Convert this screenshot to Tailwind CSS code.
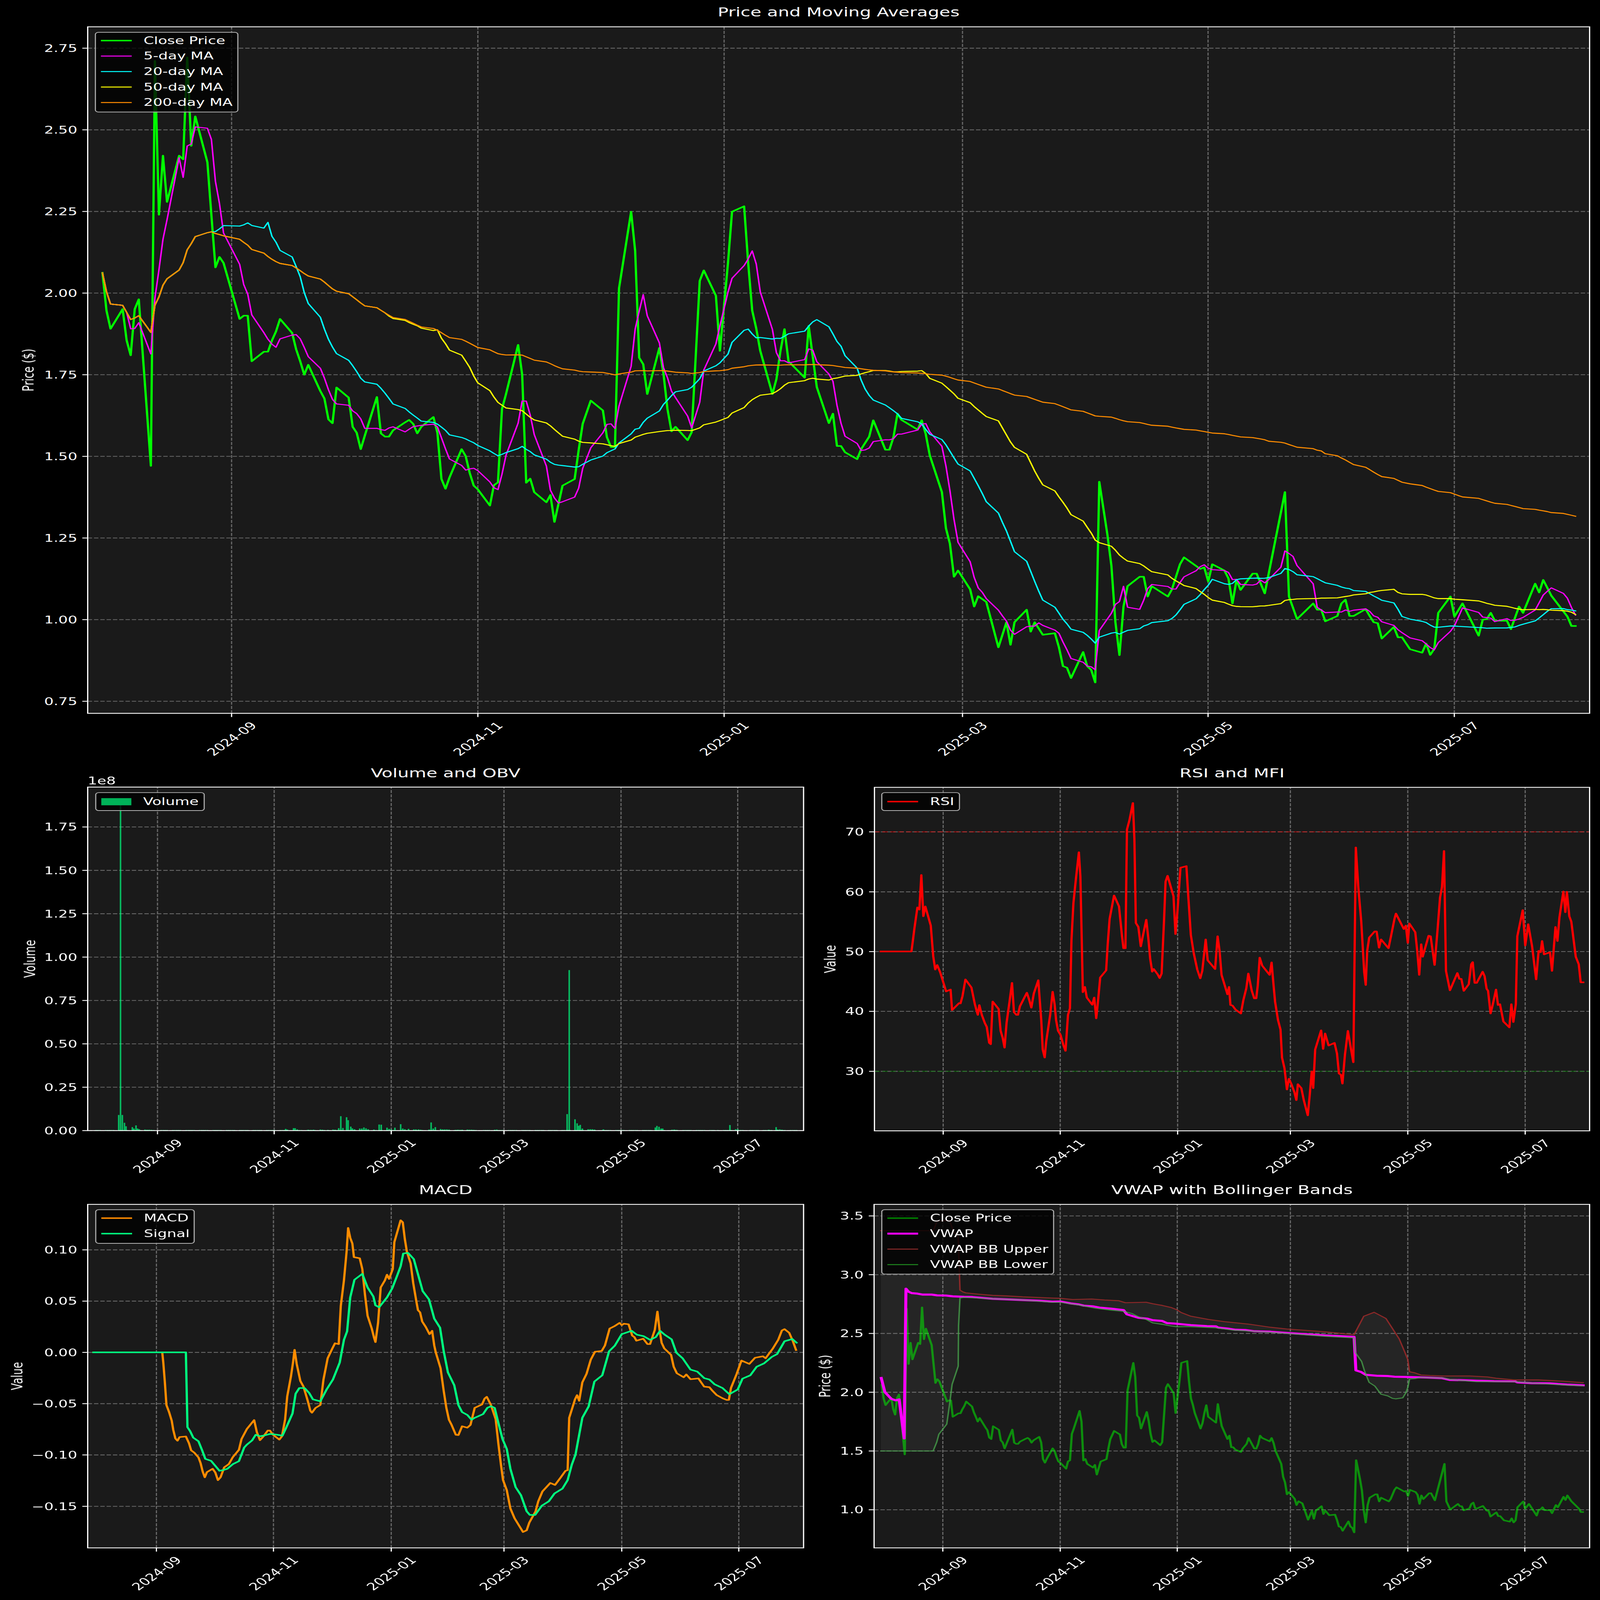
<!DOCTYPE html>
<html lang="en">
<head>
<meta charset="utf-8">
<title>Technical analysis charts</title>
<script src="https://cdn.jsdelivr.net/npm/@tailwindcss/browser@4"></script>
</head>
<body class="bg-black">
<div class="w-screen h-screen overflow-hidden">
<main id="page" class="origin-top-left w-[4470px] h-[6507px] bg-black flex flex-col text-white text-[41.67px] leading-none font-[family-name:'DejaVu_Sans',sans-serif]">

  <section class="relative">
    <h2 class="h-[100px] leading-[100px] text-center text-[50px] font-normal pl-[245px] pr-[29px]">Price and Moving Averages</h2>
    <svg id="top" class="block fill-white overflow-visible" width="4470" height="3018" viewBox="0 100 4470 3018"></svg>
    <div class="absolute left-[265px] top-[130px] w-[401px] h-[327px] bg-black/80 border-[3.3px] border-[#b0b0b0] rounded-[10px] pl-[14px] pt-[1px] flex flex-col">
      <div class="flex items-center h-[62.8px]"><span class="w-[86px] h-[6px] mr-[33px] bg-[#00ff00]"></span>Close Price</div>
      <div class="flex items-center h-[62.8px]"><span class="w-[86px] h-[4px] mr-[33px] bg-[#ff00ff]"></span>5-day MA</div>
      <div class="flex items-center h-[62.8px]"><span class="w-[86px] h-[4px] mr-[33px] bg-[#00ffff]"></span>20-day MA</div>
      <div class="flex items-center h-[62.8px]"><span class="w-[86px] h-[4px] mr-[33px] bg-[#ffff00]"></span>50-day MA</div>
      <div class="flex items-center h-[62.8px]"><span class="w-[86px] h-[4px] mr-[33px] bg-[#ff8c00]"></span>200-day MA</div>
    </div>
  </section>

  <div class="grid grid-cols-[2270px_2200px]">
    <section class="relative h-[1695px]">
      <h2 class="h-[52px] leading-[52px] text-center text-[50px] font-normal pl-[245px] pr-[25px]">Volume and OBV</h2>
      <svg id="vol" class="block fill-white overflow-visible" width="2270" height="1643" viewBox="0 3170 2270 1643"></svg>
      <div class="absolute left-[266px] top-[104px] w-[306px] h-[76px] bg-black/80 border-[3.3px] border-[#b0b0b0] rounded-[10px] pl-[14px] flex items-center">
        <span class="w-[84px] h-[29px] mr-[33px] bg-[#00b359]"></span>Volume
      </div>
    </section>
    <section class="relative h-[1695px]">
      <h2 class="h-[52px] leading-[52px] text-center text-[50px] font-normal pl-[173px] pr-[29px]">RSI and MFI</h2>
      <svg id="rsi" class="block fill-white overflow-visible" width="2200" height="1643" viewBox="2270 3170 2200 1643"></svg>
      <div class="absolute left-[192px] top-[104px] w-[220px] h-[76px] bg-black/80 border-[3.3px] border-[#b0b0b0] rounded-[10px] pl-[14px] flex items-center">
        <span class="w-[86px] h-[6px] mr-[33px] bg-[#ff0000]"></span>RSI
      </div>
    </section>
    <section class="relative h-[1694px]">
      <h2 class="h-[52px] leading-[52px] text-center text-[50px] font-normal pl-[245px] pr-[25px]">MACD</h2>
      <svg id="macd" class="block fill-white overflow-visible" width="2270" height="1642" viewBox="0 4865 2270 1642"></svg>
      <div class="absolute left-[266px] top-[105px] w-[278px] h-[140px] bg-black/80 border-[3.3px] border-[#b0b0b0] rounded-[10px] pl-[14px] pt-[1px] flex flex-col">
        <div class="flex items-center h-[63px]"><span class="w-[86px] h-[6px] mr-[33px] bg-[#ff8c00]"></span>MACD</div>
        <div class="flex items-center h-[63px]"><span class="w-[86px] h-[6px] mr-[33px] bg-[#00ff7f]"></span>Signal</div>
      </div>
    </section>
    <section class="relative h-[1694px]">
      <h2 class="h-[52px] leading-[52px] text-center text-[50px] font-normal pl-[173px] pr-[29px]">VWAP with Bollinger Bands</h2>
      <svg id="vwap" class="block fill-white overflow-visible" width="2200" height="1642" viewBox="2270 4865 2200 1642"></svg>
      <div class="absolute left-[192px] top-[105px] w-[483px] h-[265px] bg-black/80 border-[3.3px] border-[#b0b0b0] rounded-[10px] pl-[14px] pt-[1px] flex flex-col">
        <div class="flex items-center h-[63px]"><span class="w-[86px] h-[6px] mr-[33px] bg-[#008000]"></span>Close Price</div>
        <div class="flex items-center h-[63px]"><span class="w-[86px] h-[8px] mr-[33px] bg-[#ff00ff]"></span>VWAP</div>
        <div class="flex items-center h-[63px]"><span class="w-[86px] h-[4px] mr-[33px] bg-[#8a2a2a]"></span>VWAP BB Upper</div>
        <div class="flex items-center h-[63px]"><span class="w-[86px] h-[4px] mr-[33px] bg-[#1f861f]"></span>VWAP BB Lower</div>
      </div>
    </section>
  </div>
</main>
</div>

<script>
/* fit the 4470x6507 layout to the actual window: scale is 1 at the nominal size */
const page=document.getElementById('page');
const fit=()=>{page.style.transform=`scale(${innerWidth/4470},${innerHeight/6507})`;};
fit();addEventListener('resize',fit);

const NS='http://www.w3.org/2000/svg';
function el(p,tag,a,txt){const e=document.createElementNS(NS,tag);for(const k in a)e.setAttribute(k,a[k]);if(txt!==undefined)e.textContent=txt;p.appendChild(e);return e;}
const DATES=['2024-09','2024-11','2025-01','2025-03','2025-05','2025-07'];
function panel(id,o){
  const s=document.getElementById(id),w=o.r-o.l,h=o.b-o.t;
  el(s,'rect',{x:o.l,y:o.t,width:w,height:h,fill:'#1a1a1a'});
  const cp=el(el(s,'defs',{}),'clipPath',{id:'c'+id});el(cp,'rect',{x:o.l,y:o.t,width:w,height:h});
  const g={stroke:'#676767','stroke-width':3.3,'stroke-dasharray':'12.3 5.3',fill:'none'};
  o.xt.forEach(x=>el(s,'line',{x1:x,x2:x,y1:o.b,y2:o.t,...g}));
  o.yt.forEach(t=>el(s,'line',{x1:o.l,x2:o.r,y1:t[0],y2:t[0],...g}));
  const d=el(s,'g',{'clip-path':'url(#c'+id+')'});
  o.after=()=>{
    el(s,'rect',{x:o.l,y:o.t,width:w,height:h,fill:'none',stroke:'#fff','stroke-width':3.4});
    o.xt.forEach((x,i)=>{
      el(s,'line',{x1:x,x2:x,y1:o.b,y2:o.b+15,stroke:'#fff','stroke-width':3.4});
      const cx=x+1,cy=o.b+104;
      el(s,'text',{x:cx,y:cy,'text-anchor':'middle','dominant-baseline':'central',transform:`rotate(-45 ${cx} ${cy})`},DATES[i]);
    });
    o.yt.forEach(t=>{
      el(s,'line',{x1:o.l-15,x2:o.l,y1:t[0],y2:t[0],stroke:'#fff','stroke-width':3.4});
      el(s,'text',{x:o.l-29,y:t[0]+1,'text-anchor':'end','dominant-baseline':'central'},t[1]);
    });
    const yc=(o.t+o.b)/2;
    el(s,'text',{x:o.yl[0],y:yc,'text-anchor':'middle','dominant-baseline':'central',transform:`rotate(-90 ${o.yl[0]} ${yc})`},o.yl[1]);
  };
  return d;
}
function line(g,pts,color,w,op){return el(g,'polyline',{points:pts.map(p=>p[0].toFixed(1)+','+p[1].toFixed(1)).join(' '),fill:'none',stroke:color,'stroke-width':w,'stroke-opacity':op===undefined?1:op,'stroke-linejoin':'round','stroke-linecap':'square'});}

/* --- digitised close price: [calendar day since 2024-07-31, pixel y in the top chart] --- */
const z6=p=>100+p*1.2117, z8=p=>1750+p/3, z7=p=>1000+p*1.2755;
const V=[];
[[0,833],[1,960],[2,1021],[5,955],[6,1060],[7,1110],[8,955],[9,922],[12,1481],[13,122],[14,638],[15,440],[16,595],[19,440],[20,452],[21,110],[22,407],[23,308],[26,462],[27,640],[28,815],[29,780],[30,800],[34,988],[35,977],[36,977],[37,1130],[40,1098],[41,1098],[42,1060],[43,1030],[44,988],[47,1035],[48,1090],[49,1130],[50,1175],[51,1142],[54,1230],[55,1255],[56,1325],[57,1338],[58,1218],[61,1252],[62,1350],[63,1370],[64,1425],[65,1380],[68,1250],[69,1372],[70,1383],[71,1383],[72,1362],[75,1335],[76,1327],[77,1340],[78,1372],[79,1350],[82,1317],[83,1370],[84,1525],[85,1558],[86,1520]].forEach(a=>V.push([a[0],z6(a[1])]));
[[89,230],[90,315],[91,520],[92,675],[93,720],[96,918],[97,670],[98,635]].forEach(a=>V.push([a[0],z8(a[1])]));
[[99,1290],[100,1240],[103,1075],[104,1175]].forEach(a=>V.push([a[0],z6(a[1])]));
[[105,640],[106,590],[107,755],[110,878],[111,790],[112,1118],[114,675],[117,595],[118,240]].forEach(a=>V.push([a[0],z8(a[1])]));
[[119,1340],[121,1262],[124,1295],[125,1385],[126,1418],[127,1418],[128,885],[131,628],[132,760],[133,1118],[134,1140],[135,1240],[138,1085],[139,1170],[140,1290],[141,1365],[142,1350],[145,1395],[146,1368],[148,860],[149,825],[152,910],[153,1095],[155,800],[156,628],[159,610],[160,800],[161,960],[162,1020],[163,1095],[166,1240],[167,1190],[168,1095],[169,1022],[170,1130],[174,1185]].forEach(a=>V.push([a[0],z6(a[1])]));
[[41,255],[57,450],[80,565],[88,535],[95,638],[103,638],[111,658],[134,680],[142,648],[157,608],[165,556],[188,650],[196,650],[204,610],[212,535],[219,555],[250,586],[258,556],[266,600],[274,668],[298,785],[306,900],[313,950],[321,1055],[329,1035],[352,1095],[360,1150],[368,1117],[384,1135],[406,1280],[422,1200],[430,1272],[437,1200],[461,1160],[468,1230],[476,1200],[484,1220],[491,1240],[515,1235],[523,1280],[531,1340],[539,1345],[547,1378],[569,1295],[577,1340],[585,1352],[593,1392],[601,752],[616,920],[624,1020],[632,1200],[640,1305],[648,1150],[656,1085],[679,1055],[687,1055],[695,1118],[702,1085],[734,1118],[742,1095],[757,1015],[765,993],[796,1030],[804,1025],[812,1070],[819,1015],[843,1035],[850,1060],[858,1140],[866,1065],[874,1097],[897,1045],[905,1045],[920,1108],[958,785],[966,1118],[982,1190],[1013,1140],[1021,1160],[1029,1160],[1037,1197],[1059,1180],[1067,1140],[1075,1128],[1083,1180],[1090,1180],[1114,1158],[1122,1180],[1130,1200],[1138,1203],[1146,1252],[1169,1215],[1177,1248],[1184,1248],[1200,1286],[1224,1297],[1232,1268],[1240,1304],[1248,1285],[1255,1170],[1279,1118],[1286,1182],[1302,1140],[1333,1243],[1341,1192],[1349,1190],[1357,1170],[1365,1195],[1388,1195],[1396,1222],[1411,1150],[1419,1170],[1442,1077],[1450,1105],[1458,1065],[1473,1115],[1504,1182],[1512,1212],[1520,1212]].forEach(a=>V.push([Math.round(213+(a[0]-337)/7.79),z7(a[1])]));

const price=y=>2.75-(y-196)/1328;
const xTop=d=>647+(d-32)*11.275;
const interp=d=>{for(let i=1;i<V.length;i++){if(d<=V[i][0]){const a=V[i-1],b=V[i];return a[1]+(b[1]-a[1])*(d-a[0])/(b[0]-a[0]);}}return V[V.length-1][1];};
const HOL=[33,120,147,154,173,201,261,299,323,338];
const days=[];for(let d=0;d<=365;d++){const wd=(d+2)%7;if(wd<5&&!HOL.includes(d))days.push(d);}
const Y=days.map(interp);
const roll=n=>days.map((d,i)=>{let s=0,c=0;for(let j=Math.max(0,i-n+1);j<=i;j++){s+=Y[j];c++;}return [xTop(d),s/c];});

/* --- price panel --- */
{
  const yt=['2.75','2.50','2.25','2.00','1.75','1.50','1.25','1.00','0.75'].map((t,i)=>[196+332*i,t]);
  const o={l:245,t:109,r:4441,b:2901,xt:[647,1335,2023,2689,3375,4063],yt,yl:[80,'Price ($)']};
  const g=panel('top',o);
  line(g,V.map(p=>[xTop(p[0]),p[1]]),'#00ff00',6.25);
  line(g,roll(5),'#ff00ff',4.17);
  line(g,roll(20),'#00ffff',4.17);
  line(g,roll(50),'#ffff00',4.17);
  line(g,roll(200),'#ff8c00',4.17);
  o.after();
}

/* --- volume panel --- */
{
  const yt=['0.00','0.25','0.50','0.75','1.00','1.25','1.50','1.75'].map((t,i)=>[4598-176.4*i,t]);
  const o={l:245,t:3201,r:2245,b:4598,xt:[440,766,1093,1408,1735,2061],yt,yl:[84,'Volume']};
  const g=panel('vol',o);
  days.forEach(d=>{const x=440+(d-32)*5.36;el(g,'rect',{x:x-2.1,y:4598-2.5,width:4.3,height:2.5,fill:'#00ff7f','fill-opacity':.7});});
  [[226,.09],[229.5,1.885],[233,.09],[237,.045],[240,.025],[252,.02],[255,.012],[259,.03],[262,.012],[265,.008],[276,.006],[280,.005],[284,.005],[288,.004],[544,.01],[547,.006],[559,.014],[562,.014],[566,.007],[587,.005],[592,.004],[597,.005],[610,.006],[614,.005],[618,.003],[624,.004],[634,.006],[638,.005],[645,.014],[649,.083],[653,.015],[660,.077],[663,.06],[668,.023],[671,.013],[675,.008],[685,.012],[689,.012],[693,.018],[697,.013],[701,.008],[712,.006],[722,.035],[726,.034],[737,.017],[741,.01],[745,.007],[752,.017],[763,.037],[767,.012],[771,.008],[778,.01],[788,.007],[792,.007],[797,.007],[801,.005],[817,.006],[821,.047],[825,.012],[829,.02],[839,.009],[843,.007],[847,.007],[851,.007],[855,.006],[868,.004],[872,.005],[876,.004],[880,.005],[890,.006],[894,.005],[898,.005],[902,.004],[942,.005],[946,.006],[1080,.095],[1084,.925],[1095,.065],[1099,.042],[1102,.028],[1105,.033],[1109,.012],[1120,.008],[1124,.008],[1128,.008],[1132,.006],[1149,.007],[1248,.018],[1251,.027],[1255,.022],[1259,.012],[1262,.012],[1280,.005],[1284,.006],[1288,.004],[1390,.032],[1401,.008],[1405,.008],[1464,.005],[1478,.02],[1481,.006],[1485,.007],[1489,.005]].forEach(b=>{
    const h=b[1]*705.7;el(g,'rect',{x:b[0]*1.467-2.1,y:4598-h,width:4.3,height:h,fill:'#00ff7f','fill-opacity':.7});
  });
  o.after();
  el(document.getElementById('vol'),'text',{x:245,y:3176,'dominant-baseline':'central'},'1e8');
}

/* --- RSI panel --- */
{
  const o={l:2443,t:3202,r:4441,b:4599,xt:[2635,2962,3290,3605,3933,4261],yt:[[3383,'70'],[3627,'60'],[3870,'50'],[4113,'40'],[4357,'30']],yl:[2320,'Value']};
  const g=panel('rsi',o);
  el(g,'line',{x1:o.l,x2:o.r,y1:3383,y2:3383,stroke:'#ff0000','stroke-opacity':.5,'stroke-width':4.17,'stroke-dasharray':'15.4 6.7'});
  el(g,'line',{x1:o.l,x2:o.r,y1:4357,y2:4357,stroke:'#008000','stroke-opacity':.5,'stroke-width':4.17,'stroke-dasharray':'15.4 6.7'});
  const r=[[116,802],[178,802],[181,760],[184,715],[190,637],[194,645],[198,515],[202,670],[206,633],[217,705],[222,820],[226,870],[230,853],[236,880],[248,952],[257,945],[260,1022],[274,996],[277,997],[281,970],[287,907],[299,937],[306,1000],[312,1040],[315,1003],[320,1040],[326,1070],[330,1085],[335,1145],[338,1150],[342,990],[354,1018],[358,1100],[362,1125],[366,1163],[370,1070],[376,990],[381,920],[385,1030],[390,1040],[393,1040],[397,1008],[411,957],[416,985],[420,1013],[425,960],[434,910],[440,1060],[443,1170],[447,1200],[450,1140],[458,1040],[463,953],[467,1000],[470,1060],[474,1100],[479,1115],[485,1155],[489,1175],[494,1040],[498,1015],[501,760],[505,620],[510,530],[516,430],[519,520],[524,955],[528,935],[532,975],[543,1002],[547,975],[551,1053],[554,1000],[559,900],[571,873],[574,780],[578,680],[587,592],[597,633],[603,745],[606,790],[610,790],[613,345],[618,310],[625,245],[628,380],[631,695],[636,710],[641,783],[645,745],[652,683],[656,750],[660,830],[664,878],[667,868],[675,888],[679,902],[683,885],[688,680],[691,540],[695,518],[707,595],[711,737],[715,650],[721,488],[733,482],[737,600],[742,740],[748,810],[755,870],[761,903],[765,875],[772,757],[776,835],[791,868],[796,745],[800,800],[804,890],[816,963],[819,935],[822,1003],[826,1005],[832,1020],[843,1035],[848,985],[854,940],[858,885],[865,950],[870,978],[874,978],[877,930],[881,825],[886,855],[901,890],[905,843],[909,930],[912,990],[918,1060],[923,1095],[926,1200],[931,1240],[936,1320],[940,1280],[945,1300],[951,1330],[955,1360],[958,1300],[965,1315],[970,1360],[978,1417],[982,1340],[986,1252],[989,1315],[993,1170],[1005,1098],[1009,1168],[1013,1110],[1020,1155],[1032,1145],[1037,1185],[1041,1260],[1045,1265],[1048,1298],[1053,1190],[1059,1100],[1064,1155],[1070,1218],[1075,412],[1080,560],[1086,690],[1092,880],[1095,928],[1098,800],[1102,750],[1113,727],[1117,727],[1122,788],[1126,757],[1141,790],[1146,745],[1153,680],[1156,660],[1172,718],[1176,705],[1180,770],[1183,697],[1195,730],[1199,800],[1203,890],[1207,775],[1210,822],[1222,743],[1226,745],[1234,853],[1240,720],[1245,600],[1249,560],[1253,425],[1257,875],[1265,948],[1280,883],[1284,905],[1288,905],[1293,950],[1303,925],[1308,850],[1311,842],[1315,920],[1319,920],[1331,878],[1335,895],[1339,942],[1342,950],[1347,1035],[1351,1005],[1358,945],[1362,1003],[1366,1000],[1373,1065],[1385,1087],[1389,1000],[1393,1067],[1398,1000],[1401,745],[1412,647],[1417,780],[1423,700],[1431,785],[1439,907],[1444,800],[1448,805],[1451,763],[1455,813],[1467,805],[1471,875],[1478,710],[1482,763],[1486,675],[1494,577],[1498,655],[1501,578],[1506,670],[1510,690],[1519,822],[1525,850],[1529,918],[1534,918]];
  line(g,r.map(p=>[2300+p[0]*1.384,3000+p[1]*1.084]),'#ff0000',6.25);
  o.after();
}

/* --- MACD panel --- */
{
  const o={l:245,t:4898,r:2245,b:6295,xt:[437,764,1093,1408,1737,2064],yt:[[5083,'0.10'],[5291.5,'0.05'],[5500,'0.00'],[5708.5,'\u22120.05'],[5917,'\u22120.10'],[6126,'\u22120.15']],yl:[48,'Value']};
  const g=panel('macd',o);
  const m=[[178,694],[309,694],[311,730],[314,800],[317,880],[322,905],[327,935],[330,968],[334,998],[338,1006],[342,993],[354,991],[360,1015],[364,1040],[370,1048],[378,1065],[382,1085],[386,1115],[390,1135],[394,1117],[405,1105],[410,1118],[415,1145],[420,1135],[427,1100],[436,1088],[443,1065],[455,1038],[460,1000],[470,965],[484,933],[489,975],[495,1004],[502,990],[510,970],[514,970],[520,985],[532,1002],[537,990],[543,930],[547,850],[554,780],[558,730],[561,685],[565,735],[572,795],[578,815],[586,865],[591,900],[594,907],[601,890],[610,880],[616,790],[624,715],[633,680],[638,662],[645,665],[649,530],[655,440],[660,340],[663,255],[667,290],[671,310],[674,358],[685,362],[690,400],[695,490],[700,565],[708,610],[712,640],[715,658],[720,590],[725,465],[733,440],[737,420],[741,435],[748,400],[751,305],[758,260],[763,228],[767,235],[771,295],[775,340],[782,380],[787,450],[793,515],[796,545],[800,553],[804,585],[811,605],[818,630],[823,618],[827,670],[830,695],[839,750],[845,830],[850,890],[855,932],[860,950],[868,985],[873,986],[880,955],[890,960],[896,950],[904,890],[918,878],[923,857],[927,851],[935,880],[944,930],[949,1015],[954,1090],[958,1145],[965,1180],[972,1245],[980,1280],[990,1310],[996,1328],[1003,1322],[1008,1295],[1020,1255],[1025,1220],[1033,1185],[1048,1155],[1057,1162],[1068,1135],[1077,1112],[1081,1110],[1084,925],[1090,890],[1095,860],[1099,845],[1103,865],[1109,800],[1117,770],[1125,720],[1133,692],[1146,689],[1152,670],[1161,610],[1170,602],[1180,590],[1184,598],[1188,593],[1197,595],[1204,635],[1208,640],[1212,653],[1225,646],[1233,665],[1238,665],[1247,615],[1252,550],[1256,615],[1260,660],[1265,680],[1278,703],[1283,745],[1289,768],[1302,782],[1307,772],[1315,789],[1330,786],[1341,815],[1351,817],[1357,830],[1365,845],[1376,856],[1384,862],[1388,862],[1392,820],[1403,770],[1412,723],[1427,735],[1438,713],[1453,708],[1458,715],[1472,680],[1482,650],[1489,617],[1494,612],[1503,625],[1510,655],[1516,686]];
  const sg=[[178,694],[354,694],[357,958],[362,972],[368,995],[378,1008],[385,1040],[391,1070],[402,1077],[418,1112],[424,1110],[433,1105],[444,1088],[455,1078],[465,1030],[470,1020],[480,1005],[487,985],[495,990],[502,988],[514,982],[525,984],[538,988],[545,960],[557,910],[563,840],[570,820],[580,820],[589,838],[596,860],[610,867],[622,825],[634,790],[647,730],[655,650],[661,620],[667,500],[675,438],[690,417],[700,465],[711,497],[715,528],[722,535],[737,500],[747,468],[757,420],[763,390],[768,345],[777,343],[788,365],[805,478],[817,507],[827,575],[838,607],[845,690],[853,765],[865,810],[873,880],[880,905],[890,915],[898,932],[904,925],[920,912],[928,890],[935,884],[942,890],[950,950],[957,1000],[965,1035],[972,1105],[982,1170],[992,1198],[1003,1255],[1009,1268],[1019,1268],[1032,1235],[1045,1220],[1056,1192],[1071,1175],[1081,1145],[1089,1090],[1096,1055],[1109,925],[1121,885],[1132,797],[1147,775],[1160,690],[1171,670],[1184,630],[1203,618],[1213,632],[1226,637],[1238,650],[1249,640],[1257,618],[1266,632],[1279,648],[1288,695],[1300,715],[1315,755],[1328,762],[1341,785],[1351,790],[1361,807],[1376,820],[1389,842],[1405,825],[1414,787],[1429,775],[1441,745],[1455,733],[1470,710],[1480,700],[1494,655],[1509,647],[1517,660]];
  const f=p=>[p[0]*1.467,4700+p[1]*1.1524];
  line(g,m.map(f),'#ff8c00',6.25);
  line(g,sg.map(f),'#00ff7f',6.25);
  o.after();
}

/* --- VWAP panel --- */
{
  const yt=['3.5','3.0','2.5','2.0','1.5','1.0'].map((t,i)=>[4945+239*i,t]);
  const o={l:2442,t:4898,r:4441,b:6295,xt:[2634,2962,3289,3605,3933,4260],yt,yl:[2305,'Price ($)']};
  const g=panel('vwap',o);
  const up=[[2461,5005],[2607,5005],[2618,4967],[2653,4963],[2663,5005],[2677,5030],[2682,5247],[2690,5254],[2698,5258],[2733,5263],[2773,5268],[2810,5270],[2857,5274],[2940,5279],[2962,5280],[2997,5285],[3050,5283],[3086,5287],[3126,5290],[3144,5298],[3202,5296],[3220,5302],[3247,5309],[3273,5318],[3287,5326],[3300,5338],[3327,5353],[3376,5366],[3421,5375],[3488,5385],[3550,5398],[3595,5405],[3700,5416],[3783,5428],[3810,5353],[3839,5337],[3872,5362],[3909,5445],[3925,5500],[3933,5529],[3938,5579],[3952,5583],[3970,5592],[3995,5594],[4032,5596],[4106,5596],[4156,5600],[4180,5605],[4230,5612],[4298,5612],[4366,5617],[4423,5623]];
  const lo=[[2461,5901],[2607,5901],[2617,5865],[2623,5833],[2645,5792],[2652,5721],[2660,5630],[2677,5556],[2678,5391],[2682,5279],[2693,5276],[2733,5279],[2773,5282],[2857,5287],[2940,5296],[2962,5296],[3014,5307],[3059,5320],[3104,5328],[3139,5333],[3162,5342],[3180,5355],[3202,5366],[3220,5380],[3247,5386],[3273,5393],[3289,5396],[3318,5395],[3397,5400],[3443,5409],[3550,5418],[3700,5434],[3783,5441],[3786,5500],[3804,5537],[3812,5575],[3825,5622],[3841,5637],[3858,5670],[3877,5677],[3890,5687],[3899,5689],[3919,5685],[3927,5666],[3933,5643],[3938,5608],[3955,5606],[3970,5602],[4029,5604],[4050,5610],[4125,5619],[4233,5619],[4279,5625],[4378,5633],[4423,5636]];
  const vw=[[2462,5604],[2472,5661],[2490,5689],[2502,5695],[2512,5691],[2526,5850],[2531,5241],[2538,5253],[2547,5259],[2563,5261],[2578,5265],[2603,5265],[2618,5268],[2643,5269],[2662,5272],[2693,5274],[2717,5275],[2773,5282],[2807,5284],[2857,5287],[2903,5290],[2940,5294],[2962,5293],[2992,5301],[3014,5305],[3028,5310],[3055,5313],[3072,5318],[3104,5322],[3139,5328],[3148,5345],[3166,5353],[3180,5359],[3206,5363],[3220,5369],[3247,5372],[3260,5381],[3282,5383],[3327,5389],[3372,5393],[3397,5394],[3403,5399],[3434,5404],[3452,5408],[3479,5409],[3505,5414],[3550,5416],[3595,5421],[3700,5431],[3783,5437],[3788,5573],[3803,5580],[3815,5591],[3846,5595],[3877,5596],[3896,5599],[3933,5600],[3982,5602],[4029,5605],[4050,5612],[4088,5613],[4125,5615],[4174,5617],[4233,5618],[4239,5622],[4279,5625],[4329,5626],[4378,5631],[4423,5634]];
  el(g,'polygon',{points:up.concat(lo.slice().reverse()).map(p=>p.join(',')).join(' '),fill:'#ffffff','fill-opacity':.05});
  line(g,V.map(p=>[2635+(p[0]-32)*5.366,6140-(price(p[1])-1)*478]),'#00ff00',6.25,.5);
  line(g,vw,'#ff00ff',8.33);
  line(g,up,'#a52a2a',4.17,.8);
  line(g,lo,'#4caf50',4.17,.7);
  o.after();
}
</script>
</body>
</html>
